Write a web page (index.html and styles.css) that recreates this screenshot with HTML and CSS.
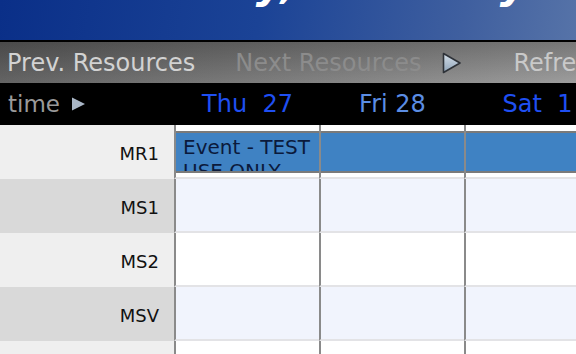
FILE: index.html
```html
<!DOCTYPE html>
<html lang="en">
<head>
    <meta charset="UTF-8">
    <meta name="viewport" content="width=device-width, initial-scale=1.0">
    <title>Resource Schedule</title>
    <link rel="stylesheet" href="styles.css">
</head>
<body>
    <div class="banner">
        <div class="banner-title">Thursday, February 27 - Saturday, March 1</div>
    </div>

    <div class="toolbar">
        <span class="tool">Prev. Resources</span>
        <span class="tool disabled">Next Resources</span>
        <svg class="tool-icon" width="21" height="22" viewBox="0 0 21 22">
            <defs>
                <linearGradient id="playFill" x1="0" y1="0" x2="0" y2="1">
                    <stop offset="0" stop-color="#d6e0ea"/>
                    <stop offset="1" stop-color="#8ea3b8"/>
                </linearGradient>
            </defs>
            <polygon points="2.5,1.5 19,11 2.5,20.5" fill="url(#playFill)" stroke="#2e3238" stroke-width="1.6" stroke-linejoin="round"/>
        </svg>
        <span class="tool refresh">Refresh</span>
    </div>

    <div class="day-header">
        <div class="time-cell">
            time
            <svg class="time-icon" width="15" height="14" viewBox="0 0 15 14">
                <polygon points="1,0.5 14,7 1,13.5" fill="#a9b6c6"/>
            </svg>
        </div>
        <div class="day weekend">Thu&nbsp; 27</div>
        <div class="day">Fri 28</div>
        <div class="day weekend">Sat&nbsp; 1</div>
    </div>

    <div class="grid">
        <div class="row">
            <div class="label">MR1</div>
            <div class="event"><div class="event-text">Event - TEST USE ONLY</div></div>
            <div class="cell c1"></div>
            <div class="cell c2"></div>
            <div class="cell c3"></div>
        </div>
        <div class="row alt">
            <div class="label">MS1</div>
            <div class="cell c1"></div>
            <div class="cell c2"></div>
            <div class="cell c3"></div>
        </div>
        <div class="row">
            <div class="label">MS2</div>
            <div class="cell c1"></div>
            <div class="cell c2"></div>
            <div class="cell c3"></div>
        </div>
        <div class="row alt">
            <div class="label">MSV</div>
            <div class="cell c1"></div>
            <div class="cell c2"></div>
            <div class="cell c3"></div>
        </div>
        <div class="row">
            <div class="label"></div>
            <div class="cell c1"></div>
            <div class="cell c2"></div>
            <div class="cell c3"></div>
        </div>
    </div>
</body>
</html>
```

FILE: styles.css
```css
/* Resource schedule view */
body {
    font-family: "DejaVu Sans", Verdana, sans-serif;
    margin: 0;
    padding: 0;
    width: 576px;
    height: 354px;
    overflow: hidden;
    background-color: #fff;
}

.banner {
    height: 40px;
    overflow: hidden;
    background: linear-gradient(100deg, #0a2f88 0%, #1b4396 45%, #3f5f9f 80%, #5673a8 100%);
    border-bottom: 2px solid #000;
}

.banner-title {
    margin-top: -38px;
    padding-left: 60px;
    font-size: 43px;
    line-height: 43px;
    font-weight: bold;
    font-style: italic;
    color: #fff;
    white-space: nowrap;
}

.toolbar {
    height: 41px;
    display: flex;
    align-items: center;
    padding-left: 7px;
    white-space: nowrap;
    overflow: hidden;
    background:
        linear-gradient(to bottom, rgba(0, 0, 0, 0.22), rgba(255, 255, 255, 0.04)),
        linear-gradient(to right, #5e5e5e, #7a7a7a 50%, #999 100%);
}

.tool {
    font-size: 24px;
    color: #d2d2d2;
}

.tool.disabled {
    color: #8c8c8c;
    margin-left: 40px;
}

.tool-icon {
    margin-left: 20px;
    flex-shrink: 0;
}

.tool.refresh {
    color: #c9c9c9;
    margin-left: 51px;
}

.day-header {
    height: 42px;
    display: grid;
    grid-template-columns: 174px repeat(3, 145px);
    align-items: center;
    background-color: #000;
    white-space: nowrap;
    overflow: hidden;
}

.time-cell {
    display: flex;
    align-items: center;
    padding-left: 8px;
    font-size: 23px;
    color: #9a9a9a;
}

.time-icon {
    margin-left: 11px;
}

.day {
    text-align: center;
    font-size: 24px;
    color: #5b8de4;
    padding-left: 2px;
}

.day.weekend {
    color: #1f4ff2;
}

.grid {
    overflow: hidden;
}

.row {
    display: grid;
    grid-template-columns: 174px repeat(3, 145px);
    grid-template-rows: 54px;
    background-color: #fff;
}

.row.alt {
    background-color: #f1f4fd;
}

.label {
    grid-row: 1;
    grid-column: 1;
    display: flex;
    align-items: center;
    justify-content: flex-end;
    padding-right: 15px;
    padding-top: 3px;
    font-size: 18px;
    color: #111;
    background-color: #efefef;
}

.row.alt .label {
    background-color: #d9d9d9;
}

.cell {
    grid-row: 1;
    border-left: 2px solid #8a8a8a;
    border-bottom: 2px solid #e3e3e6;
}

.c1 { grid-column: 2; }
.c2 { grid-column: 3; }
.c3 { grid-column: 4; }

.event {
    grid-row: 1;
    grid-column: 2 / -1;
    align-self: start;
    margin-top: 6px;
    height: 36px;
    overflow: hidden;
    padding: 2px 9px 0;
    box-sizing: content-box;
    background-color: #3f82c3;
    border-top: 2px solid #7a7a7a;
    border-bottom: 2px solid #7a7a7a;
}

.event-text {
    width: 134px;
    font-size: 20px;
    line-height: 24px;
    color: #0b1a3c;
}
```
